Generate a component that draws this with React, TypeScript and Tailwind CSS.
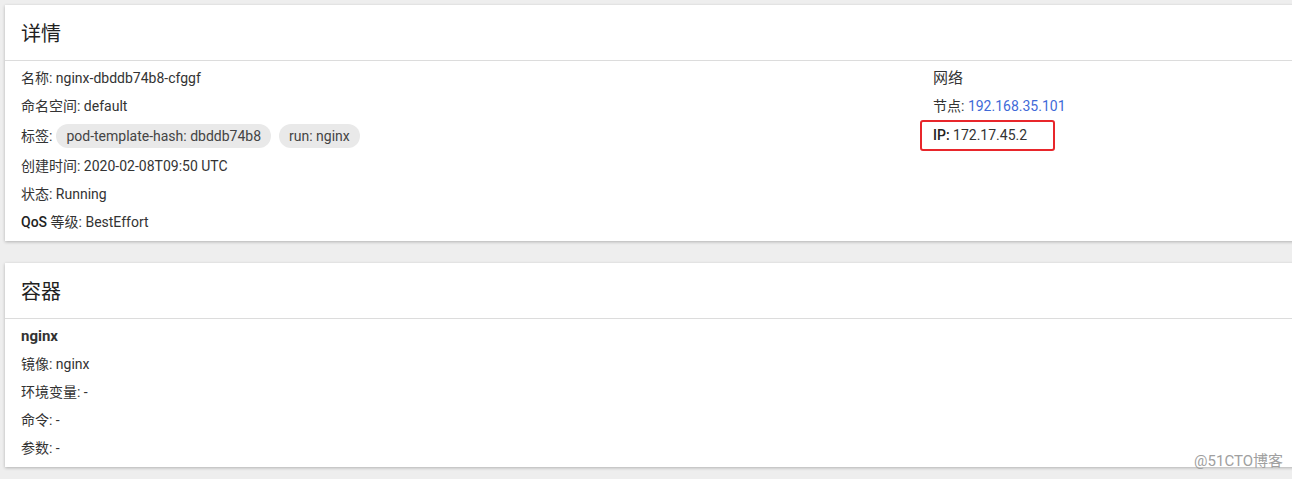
import React from 'react'

const font = { fontFamily: 'Roboto, "Noto Sans CJK SC", sans-serif' }

function Row({ children, className = '' }: { children: React.ReactNode; className?: string }) {
  return <div className={`flex h-[28px] items-center text-[14px] text-[#333] ${className}`}>{children}</div>
}

function Chip({ children }: { children: React.ReactNode }) {
  return (
    <span className="inline-flex h-[24px] items-center rounded-full bg-[#e9e9e9] px-[10px] text-[14px] text-[#444]">
      {children}
    </span>
  )
}

function Card({ title, children }: { title: string; children: React.ReactNode }) {
  return (
    <div className="mr-[-8px] bg-white shadow-[0_1px_3px_rgba(0,0,0,0.25)]">
      <div className="flex h-[56px] items-center border-b border-[#dcdcdc] px-[16px] pt-[2px] text-[20px] text-[#222]">{title}</div>
      {children}
    </div>
  )
}

export default function App() {
  return (
    <div className="relative h-[479px] w-[1292px] overflow-hidden bg-[#eeeeee] pl-[5px] pt-[5px]" style={font}>
      <Card title="详情">
        <div className="flex pb-[5px] pl-[16px] pt-[3px]">
          <div className="w-[912px]">
            <Row>名称: nginx-dbddb74b8-cfggf</Row>
            <Row>命名空间: default</Row>
            <div className="flex h-[32px] items-center gap-[8px] text-[14px] text-[#333]">
              <span className="-mr-[4px]">标签:</span>
              <Chip>pod-template-hash: dbddb74b8</Chip>
              <Chip>run: nginx</Chip>
            </div>
            <Row>创建时间: 2020-02-08T09:50 UTC</Row>
            <Row>状态: Running</Row>
            <Row>
              <span className="font-medium text-[#222]">QoS</span>&nbsp;等级: BestEffort
            </Row>
          </div>
          <div>
            <Row className="text-[15px]">网络</Row>
            <Row>
              节点:&nbsp;<span className="text-[#3f6ad8]">192.168.35.101</span>
            </Row>
            <div className="-ml-[13px] flex h-[31px] w-[135px] items-center rounded-[3px] border-2 border-[#e8262b] pl-[11px] text-[14px] text-[#333]">
              <span className="font-medium text-[#222]">IP:</span>&nbsp;172.17.45.2
            </div>
          </div>
        </div>
      </Card>
      <div className="h-[22px]" />
      <Card title="容器">
        <div className="pb-[5px] pl-[16px] pt-[3px]">
          <Row className="text-[15px] font-bold text-[#222]">nginx</Row>
          <Row>镜像: nginx</Row>
          <Row>环境变量: -</Row>
          <Row>命令: -</Row>
          <Row>参数: -</Row>
        </div>
      </Card>
      <div className="absolute bottom-[7px] right-[9px] text-[15px] text-[#a0a0a0]">@51CTO博客</div>
    </div>
  )
}
